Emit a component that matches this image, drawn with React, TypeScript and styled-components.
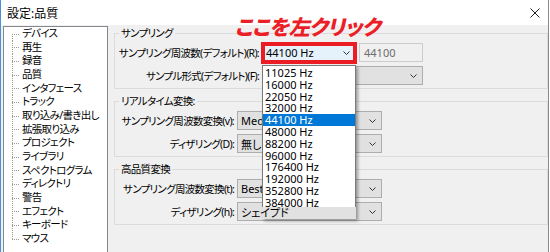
import React from 'react'
import styled, { createGlobalStyle } from 'styled-components'

const GlobalStyle = createGlobalStyle`
  html, body {
    margin: 0;
    padding: 0;
    background: #fff;
  }
  body {
    font-family: "Noto Sans", "Noto Sans CJK JP", sans-serif;
    font-size: 11px;
    color: #000;
    font-feature-settings: "palt";
  }
`

const Window = styled.div`
  position: relative;
  width: 549px;
  height: 252px;
  box-sizing: border-box;
  border-left: 1px solid #4a90d9;
  border-right: 1px solid #8a8a8a;
  display: flex;
  flex-direction: column;
  overflow: hidden;
`

const TitleBar = styled.div`
  height: 25px;
  flex: none;
  background: #fff;
  display: flex;
  align-items: center;
  justify-content: space-between;
  padding: 0 8px 0 6px;
  font-size: 12px;
`

const CloseIcon = () => (
  <svg width="10" height="10" viewBox="0 0 10 10">
    <path d="M0.5 0.5 L9.5 9.5 M9.5 0.5 L0.5 9.5" stroke="#222" strokeWidth="1" fill="none" />
  </svg>
)

const Body = styled.div`
  flex: 1;
  min-height: 0;
  display: flex;
  background: #f0f0f0;
  padding: 1px 0 0 2px;
  font-size: 10.5px;
  letter-spacing: -0.7px;
`

const Tree = styled.ul`
  flex: none;
  width: 103px;
  margin: 0;
  padding: 0;
  list-style: none;
  background: #fff;
  border: 1px solid #828790;
  border-bottom: none;
`

const dotsH = 'repeating-linear-gradient(to right, #9a9a9a 0 1px, transparent 1px 2px)'
const dotsV = 'repeating-linear-gradient(to bottom, #9a9a9a 0 1px, transparent 1px 2px)'

const TreeItem = styled.li`
  position: relative;
  height: 13.67px;
  line-height: 13.67px;
  padding-left: 18px;
  white-space: nowrap;

  &::before {
    content: '';
    position: absolute;
    left: 8px;
    top: 50%;
    width: 8px;
    height: 1px;
    background: ${dotsH};
  }
  &::after {
    content: '';
    position: absolute;
    left: 8px;
    top: 0;
    bottom: 0;
    width: 1px;
    background: ${dotsV};
  }
  &:first-child::after {
    top: 50%;
  }
  &:last-child::after {
    bottom: 50%;
  }
`

const Main = styled.div`
  flex: 1;
  display: flex;
  flex-direction: column;
  gap: 5px;
  padding-left: 6px;
`

const Group = styled.fieldset`
  margin: 0;
  padding: 3px 0;
  min-width: 0;
  border: 1px solid #dcdcdc;
  display: flex;
  flex-direction: column;
  gap: 4px;
`

const Legend = styled.legend`
  margin-left: 4px;
  padding: 0 2px;
  line-height: 14px;
`

const Row = styled.div`
  display: flex;
  align-items: center;
  gap: 3px;
`

const Label = styled.label<{ $w: number }>`
  flex: none;
  width: ${p => p.$w}px;
  text-align: right;
  white-space: nowrap;
`

const Combo = styled.div<{ $w: number; $hover?: boolean }>`
  flex: none;
  width: ${p => p.$w}px;
  height: 19px;
  box-sizing: border-box;
  border: 1px solid ${p => (p.$hover ? '#0078d7' : '#adadad')};
  background: ${p => (p.$hover ? '#e5f1fb' : '#e1e1e1')};
  display: flex;
  align-items: center;
  justify-content: space-between;
  padding: 0 5px 0 3px;
  white-space: nowrap;
  overflow: hidden;
  font-size: 11px;
  letter-spacing: 0;
`

const TextBox = styled.div`
  flex: none;
  width: 64px;
  height: 19px;
  box-sizing: border-box;
  border: 1px solid #cccccc;
  background: #f0f0f0;
  color: #6d6d6d;
  display: flex;
  align-items: center;
  padding-left: 4px;
  font-size: 11px;
  letter-spacing: 0;
`

const Chevron = () => (
  <svg width="7" height="4" viewBox="0 0 7 4" style={{ flex: 'none' }}>
    <path d="M0.5 0.5 L3.5 3.5 L6.5 0.5" stroke="#333" strokeWidth="1" fill="none" />
  </svg>
)

const Select = ({ w, value, hover }: { w: number; value: string; hover?: boolean }) => (
  <Combo $w={w} $hover={hover}>
    <span>{value}</span>
    <Chevron />
  </Combo>
)

const RedFrame = styled.div`
  position: absolute;
  left: 260px;
  top: 42px;
  width: 96px;
  height: 22px;
  box-sizing: border-box;
  border: 4px solid #ec1c24;
`

const Callout = styled.div`
  position: absolute;
  left: 236px;
  top: 11px;
  font-family: "Noto Sans CJK JP", sans-serif;
  font-size: 21px;
  font-weight: 900;
  letter-spacing: -0.6px;
  color: #ea1f27;
  transform: skewX(-12deg);
  text-shadow: 0 0 1px #fff;
  white-space: nowrap;
`

const Popup = styled.div`
  position: absolute;
  left: 261px;
  top: 65px;
  width: 94px;
  height: 154px;
  box-shadow: 2px 2px 3px rgba(0, 0, 0, 0.35);
`

const List = styled.ul`
  margin: 0;
  padding: 1px 0 0;
  list-style: none;
  height: 142px;
  box-sizing: border-box;
  overflow: hidden;
  background: #fff;
  border: 1px solid #7a7a7a;
  border-bottom: none;
`

const Option = styled.li<{ $selected?: boolean }>`
  height: 11.8px;
  line-height: 11.8px;
  padding-left: 2px;
  background: ${p => (p.$selected ? '#0078d7' : 'transparent')};
  color: ${p => (p.$selected ? '#fff' : '#000')};
  white-space: nowrap;
`

const treeItems = [
  'デバイス', '再生', '録音', '品質', 'インタフェース', 'トラック', '取り込み/書き出し',
  '拡張取り込み', 'プロジェクト', 'ライブラリ', 'スペクトログラム', 'ディレクトリ', '警告',
  'エフェクト', 'キーボード', 'マウス',
]

const rates = [
  '11025', '16000', '22050', '32000', '44100', '48000', '88200', '96000',
  '176400', '192000', '352800', '384000',
]

export default function App() {
  return (
    <>
      <GlobalStyle />
      <Window>
        <TitleBar>
          <span>設定:品質</span>
          <CloseIcon />
        </TitleBar>
        <Body>
          <Tree>
            {treeItems.map(t => (
              <TreeItem key={t}>{t}</TreeItem>
            ))}
          </Tree>
          <Main>
            <Group>
              <Legend>サンプリング</Legend>
              <Row>
                <Label $w={144}>サンプリング周波数(デフォルト)(R):</Label>
                <Select w={94} value="44100 Hz" hover />
                <TextBox>44100</TextBox>
              </Row>
              <Row>
                <Label $w={144}>サンプル形式(デフォルト)(F):</Label>
                <Select w={161} value="32-bit float" />
              </Row>
            </Group>
            <Group>
              <Legend>リアルタイム変換:</Legend>
              <Row>
                <Label $w={119}>サンプリング周波数変換(v):</Label>
                <Select w={145} value="Medium Quality" />
              </Row>
              <Row>
                <Label $w={119}>ディザリング(D):</Label>
                <Select w={145} value="無し" />
              </Row>
            </Group>
            <Group>
              <Legend>高品質変換</Legend>
              <Row>
                <Label $w={119}>サンプリング周波数変換(t):</Label>
                <Select w={145} value="Best Quality (Slowest)" />
              </Row>
              <Row>
                <Label $w={119}>ディザリング(h):</Label>
                <Select w={145} value="シェイプド" />
              </Row>
            </Group>
          </Main>
        </Body>
        <Popup>
          <List>
            {rates.map(r => (
              <Option key={r} $selected={r === '44100'}>{r} Hz</Option>
            ))}
          </List>
        </Popup>
        <RedFrame />
        <Callout>ここを左クリック</Callout>
      </Window>
    </>
  )
}
